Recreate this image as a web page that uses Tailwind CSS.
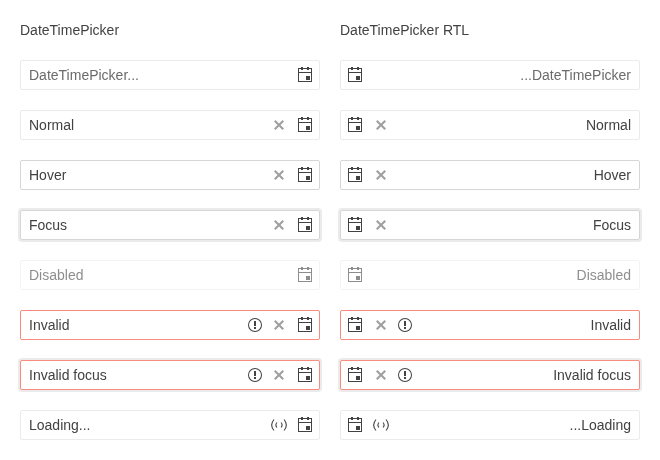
<!DOCTYPE html>
<html lang="en">
<head>
<meta charset="utf-8">
<title>DateTimePicker</title>
<script src="https://cdn.jsdelivr.net/npm/@tailwindcss/browser@4"></script>
</head>
<body class="bg-white text-[#424242] font-['Liberation_Sans',Arial,sans-serif] text-sm leading-5 antialiased">
<svg class="hidden">
  <symbol id="calendar" viewBox="0 0 16 16"><path fill-rule="evenodd" d="M1 1h3V0h2v1h4V0h2v1h3v14H1zM2 2v3h12V2h-2v1h-2V2H6v1H4V2zM2 6v8h12V6zM9 9h4v4H9z"/></symbol>
  <symbol id="clear" viewBox="0 0 16 16"><path d="M13 4.500 11.500 3 8 6.500 4.500 3 3 4.500 6.500 8 3 11.500 4.500 13 8 9.500l3.500 3.500 1.500-1.500L9.500 8z"/></symbol>
  <symbol id="warning" viewBox="0 0 16 16"><path fill-rule="evenodd" d="M8 2a6 6 0 1 1 0 12A6 6 0 0 1 8 2m0-1a7 7 0 1 0 0 14A7 7 0 0 0 8 1m-1 3h2v5H7zm0 6h2v2H7z"/></symbol>
  <symbol id="loading" viewBox="0 0 16 16"><g fill="none" stroke="currentColor" stroke-width="1.100"><path d="M3 2.500Q-1.700 8 3 13.500M13 2.500q4.700 5.500 0 11M5.900 5.500q-2 2.500 0 5M10.100 5.500q2 2.500 0 5"/></g></symbol>
</svg>
<main class="flex gap-5 px-5 pt-5 pb-5 will-change-transform">
  <section class="w-[300px]" data-dir="ltr"><h2 class="mb-5">DateTimePicker</h2></section>
  <section class="w-[300px]" data-dir="rtl"><h2 class="mb-5">DateTimePicker RTL</h2></section>
</main>
<script>
const normal = 'border-black/8', active = 'border-black/16', invalid = 'border-[#f31700]/50';
const ring = ' shadow-[0_0_0_2px_rgba(0,0,0,0.08)]';
const rows = [
  ['DateTimePicker...', normal, [], 'text-[#6b6b6b]'],
  ['Normal', normal, ['clear']],
  ['Hover', active, ['clear']],
  ['Focus', active + ring, ['clear']],
  ['Disabled', normal + ' opacity-60', []],
  ['Invalid', invalid, ['warning', 'clear']],
  ['Invalid focus', invalid + ring, ['warning', 'clear']],
  ['Loading...', normal, ['loading']],
];
const icon = (name, cls) => `<svg class="size-4 shrink-0 fill-current ${cls}"><use href="#${name}"/></svg>`;
document.querySelectorAll('section').forEach(s => {
  s.insertAdjacentHTML('beforeend', `<div class="flex flex-col gap-5" dir="${s.dataset.dir}">` + rows.map(([text, box, icons, color = '']) =>
    `<div class="flex h-[30px] items-center rounded-[2px] border ps-2 pe-1.5 ${box}">
      <span class="flex-1 ${color}">${text}</span>
      <span class="flex gap-2">${icons.map(n => icon(n, n === 'clear' ? 'opacity-50' : '')).join('')}</span>
      ${icon('calendar', 'ms-2.5')}
    </div>`).join('') + '</div>');
});
</script>
</body>
</html>
